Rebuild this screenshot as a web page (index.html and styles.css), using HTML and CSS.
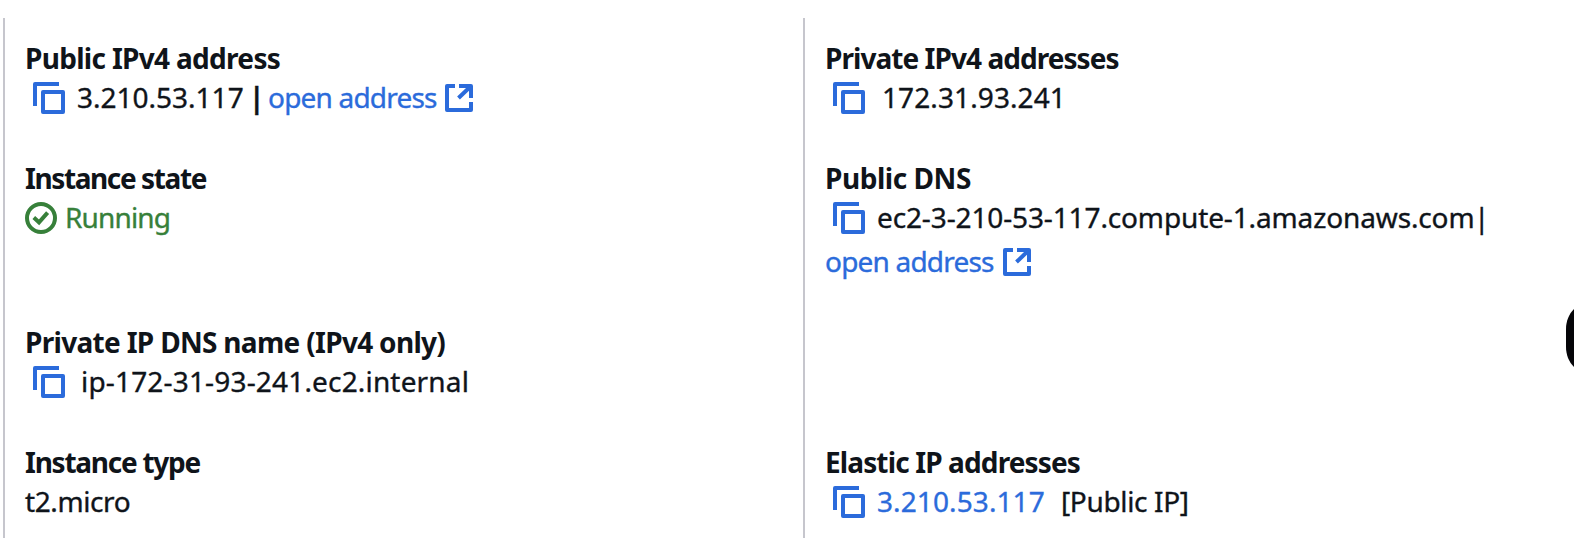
FILE: index.html
```html
<!DOCTYPE html>
<html lang="en">
<head>
<meta charset="utf-8">
<title>Instance summary</title>
<link rel="stylesheet" href="styles.css">
</head>
<body>
<svg class="defs" aria-hidden="true">
  <symbol id="copy" viewBox="0 0 32 32"><path d="M2 24V2H26" /><path d="M10 10H30V30H10Z" /></symbol>
  <symbol id="external" viewBox="0 0 28 28"><path d="M10 2H2V26H26V18" /><path d="M14 2H26V14M25 3L13.5 14" /></symbol>
  <symbol id="success" viewBox="0 0 32 32"><circle cx="16" cy="16" r="14" /><path d="M8.8 15.6L14 20.3L22.6 10.6" /></symbol>
</svg>
<main class="details">
  <section class="column">
    <div class="item">
      <h3 class="label">Public IPv4 address</h3>
      <div class="value"><svg class="icon copy"><use href="#copy"/></svg><span class="ip">3.210.53.117</span><b class="divider">|</b><a class="link">open address</a><svg class="icon external"><use href="#external"/></svg></div>
    </div>
    <div class="item tall">
      <h3 class="label state-label">Instance state</h3>
      <div class="value status"><svg class="icon success"><use href="#success"/></svg><span class="running">Running</span></div>
    </div>
    <div class="item">
      <h3 class="label">Private IP DNS name (IPv4 only)</h3>
      <div class="value"><svg class="icon copy"><use href="#copy"/></svg><span class="internal">ip-172-31-93-241.ec2.internal</span></div>
    </div>
    <div class="item">
      <h3 class="label type-label">Instance type</h3>
      <div class="value"><span class="type">t2.micro</span></div>
    </div>
  </section>
  <section class="column">
    <div class="item">
      <h3 class="label private-label">Private IPv4 addresses</h3>
      <div class="value"><svg class="icon copy"><use href="#copy"/></svg><span class="private-ip">172.31.93.241</span></div>
    </div>
    <div class="item tall">
      <h3 class="label dns-label">Public DNS</h3>
      <div class="value"><svg class="icon copy"><use href="#copy"/></svg><span class="dns">ec2-3-210-53-117.compute-1.amazonaws.com</span><span>|</span></div>
      <div class="value"><a class="link">open address</a><svg class="icon external"><use href="#external"/></svg></div>
    </div>
    <div class="item"></div>
    <div class="item">
      <h3 class="label elastic-label">Elastic IP addresses</h3>
      <div class="value"><svg class="icon copy"><use href="#copy"/></svg><a class="link elastic-ip">3.210.53.117</a><span class="note">[Public IP]</span></div>
    </div>
  </section>
</main>
<div class="edge-handle"></div>
</body>
</html>
```

FILE: styles.css
```css
body {
  margin: 0;
  height: 538px;
  overflow: hidden;
  background: #fff;
  color: #0f141a;
  font-family: "Noto Sans", "Open Sans", sans-serif;
  font-size: 28px;
  white-space: nowrap;
}
.defs { display: none; }
.details {
  display: grid;
  grid-template-columns: 800px 1fr;
  box-sizing: border-box;
  height: 538px;
  padding: 18px 0 0 3px;
}
.column {
  box-sizing: border-box;
  border-left: 2px solid #c6c6cd;
  padding: 21px 0 0 20px;
}
.item { height: 120px; }
.item.tall { height: 164px; }
.label {
  margin: 0;
  height: 36px;
  font-size: 28px;
  font-weight: 700;
  line-height: 38px;
  letter-spacing: -0.69px;
}
.state-label { letter-spacing: -1.4px; }
.type-label { letter-spacing: -1.25px; }
.private-label { letter-spacing: -0.95px; }
.dns-label { letter-spacing: -0.45px; }
.elastic-label { letter-spacing: -0.87px; }
.value {
  display: flex;
  height: 44px;
  line-height: 44px;
  -webkit-text-stroke: 0.35px currentColor;
}
.icon {
  flex: none;
  fill: none;
  stroke: #2b6bdb;
  stroke-width: 4;
  stroke-linejoin: round;
}
.copy { width: 32px; height: 32px; margin: 7px 12px 0 8px; }
.external { width: 28px; height: 28px; margin: 9px 0 0 10px; }
.success { width: 32px; height: 32px; margin: 7px 8px 0 0; stroke: #37803a; stroke-linejoin: miter; }
.link { width: 167px; color: #2b6bdb; letter-spacing: -0.8px; }
.ip { width: 172px; }
.divider { width: 19px; }
.status { color: #37803a; }
.running { letter-spacing: -0.85px; }
.type { letter-spacing: -0.4px; }
.link.elastic-ip { width: 184px; letter-spacing: 0.1px; }
.dns { width: 597px; letter-spacing: -0.13px; }
.internal { margin-left: 4px; letter-spacing: 0.17px; }
.private-ip { margin-left: 5px; letter-spacing: 0.1px; }
.note { letter-spacing: -0.35px; }
.external + * { margin-left: 0; }
.column:last-child .external { margin-left: 11px; }
.edge-handle {
  position: absolute;
  left: 1566px;
  top: 304px;
  width: 8px;
  height: 68px;
  background: #050508;
  clip-path: path("M8 5C3 10 0 17 0 25V43C0 51 3 58 8 63Z");
}
```
